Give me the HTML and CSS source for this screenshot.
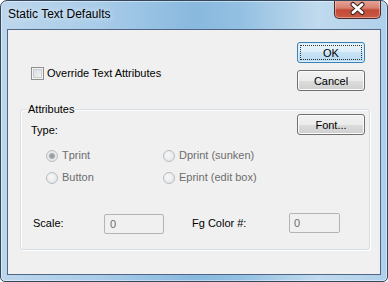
FILE: index.html
```html
<!DOCTYPE html>
<html lang="en">
<head>
    <meta charset="UTF-8">
    <title>Static Text Defaults</title>
    <link rel="stylesheet" href="styles.css">
</head>
<body>
    <div class="window">
        <!-- Заголовок окна -->
        <div class="titlebar">
            <span class="title">Static Text Defaults</span>
            <button class="close-btn" title="Close">
                <svg width="47" height="19" viewBox="0 0 47 19">
                    <path d="M19 5.5 L28 13.5 M28 5.5 L19 13.5" stroke="#3d2020" stroke-width="5" stroke-linecap="round"/>
                    <path d="M19 5.5 L28 13.5 M28 5.5 L19 13.5" stroke="#fff" stroke-width="3" stroke-linecap="round"/>
                </svg>
            </button>
        </div>

        <!-- Клиентская область -->
        <div class="client">
            <div class="top">
                <label class="check-row">
                    <span class="checkbox"></span>
                    <span>Override Text Attributes</span>
                </label>
                <div class="buttons">
                    <button class="btn btn-default">OK</button>
                    <button class="btn">Cancel</button>
                </div>
            </div>

            <div class="group">
                <span class="group-title">Attributes</span>
                <div class="group-head">
                    <span class="type-label">Type:</span>
                    <button class="btn">Font...</button>
                </div>
                <div class="radios">
                    <div class="radio-row"><span class="radio checked"></span>Tprint</div>
                    <div class="radio-row"><span class="radio"></span>Dprint (sunken)</div>
                    <div class="radio-row"><span class="radio"></span>Button</div>
                    <div class="radio-row"><span class="radio"></span>Eprint (edit box)</div>
                </div>
                <div class="fields">
                    <span class="field-label scale-label">Scale:</span>
                    <input class="edit scale-edit" type="text" value="0" disabled>
                    <span class="field-label fg-label">Fg Color #:</span>
                    <input class="edit fg-edit" type="text" value="0" disabled>
                </div>
            </div>
        </div>
    </div>
</body>
</html>
```

FILE: styles.css
```css
/* Основные стили */
body {
    margin: 0;
    font-family: "Liberation Sans", Arial, sans-serif;
    font-size: 11px;
    color: #000;
    background: #fff;
}
.window {
    width: 388px;
    height: 282px;
    box-sizing: border-box;
    border: 1px solid #34475c;
    border-radius: 7px 7px 5px 5px;
    display: flex;
    flex-direction: column;
    background: linear-gradient(to right, #bcd6ec 0%, #a9cce9 25%, #89b9de 50%, #93c0e2 62%, #c0daee 82%, #afd0ea 100%);
    box-shadow: inset 0 0 0 1px rgba(255, 255, 255, 0.45);
    overflow: hidden;
}

/* Заголовок */
.titlebar {
    height: 28px;
    display: flex;
    justify-content: space-between;
    align-items: flex-start;
    padding-left: 7px;
    padding-right: 6px;
}
.title {
    font-size: 12px;
    line-height: 27px;
    color: #000;
    text-shadow: 0 0 6px rgba(255, 255, 255, 0.9);
}
.close-btn {
    width: 47px;
    height: 19px;
    margin-top: -1px;
    padding: 0;
    border: 1px solid #4a2a2a;
    border-top: none;
    border-radius: 0 0 5px 5px;
    background: linear-gradient(#e6a99c 0%, #d7806f 45%, #c44a36 55%, #c65a44 100%);
    box-shadow: inset 0 0 0 1px rgba(255, 210, 200, 0.5);
    display: block;
    box-sizing: border-box;
}
.close-btn svg {
    display: block;
    margin: -1px 0 0 -1px;
}

/* Клиентская область */
.client {
    flex: 1;
    margin: 0 6px 6px 6px;
    border: 1px solid #4f6782;
    background: #f0f0f0;
}
.top {
    display: flex;
    justify-content: space-between;
    padding: 12px 15px 0 23px;
}
.check-row {
    display: flex;
    align-items: center;
    gap: 3px;
    height: 13px;
    line-height: 13px;
    margin-top: 25px;
}
.checkbox {
    width: 11px;
    height: 11px;
    border: 1px solid #8e8f8f;
    background: linear-gradient(135deg, #d6d8db, #f7f7f7);
    box-shadow: inset 0 0 0 1px #f4f4f4, inset 0 0 0 2px #c9ccd0;
}
.buttons {
    display: flex;
    flex-direction: column;
    gap: 7px;
}
.btn {
    width: 68px;
    height: 21px;
    padding: 0;
    border: 1px solid #707070;
    border-radius: 3px;
    font-family: inherit;
    font-size: 11px;
    color: #000;
    background: linear-gradient(#f2f2f2 0%, #ebebeb 50%, #dddddd 50%, #cfcfcf 100%);
    box-shadow: inset 0 0 0 1px #fbfbfb;
}
.btn-default {
    border-color: #3c7fb1;
    background: linear-gradient(#eaf5fc 0%, #dcedf9 50%, #c8e3f6 50%, #b9dbf2 100%);
    box-shadow: inset 0 0 0 1px #d8f0fd;
    outline: 1px dotted #333;
    outline-offset: -4px;
}

/* Группа атрибутов */
.group {
    position: relative;
    height: 141px;
    box-sizing: border-box;
    margin: 18px 10px 0 12px;
    padding: 4px 4px 0 10px;
    border: 1px solid #d5dfe5;
    border-radius: 3px;
    box-shadow: inset 1px 1px 0 #fff, 1px 1px 0 #fff;
}
.group-title {
    position: absolute;
    top: -7px;
    left: 6px;
    padding: 0 1px;
    line-height: 13px;
    background: #f0f0f0;
}
.group-head {
    display: flex;
    justify-content: space-between;
    align-items: flex-start;
}
.type-label {
    margin-top: 10px;
    line-height: 13px;
}
.radios {
    display: grid;
    grid-template-columns: 117px auto;
    row-gap: 9px;
    margin-top: 12px;
    padding-left: 15px;
    color: #6d6d6d;
}
.radio-row {
    display: flex;
    align-items: center;
    gap: 4px;
    line-height: 13px;
}
.radio {
    width: 10px;
    height: 10px;
    border: 1px solid #b8bcc0;
    border-radius: 50%;
    background: radial-gradient(circle at 40% 40%, #f8f8f8, #dfe1e3);
}
.radio.checked {
    background: radial-gradient(circle, #8e9296 0, #a8acb0 2.5px, #e4e6e8 3.5px, #f2f2f2 100%);
}
.fields {
    display: flex;
    align-items: flex-start;
    margin-top: 29px;
}
.field-label {
    line-height: 13px;
    margin-top: 4px;
}
.scale-label {
    width: 71px;
    margin-left: 2px;
}
.fg-label {
    width: 97px;
    margin-left: 28px;
}
.edit {
    height: 20px;
    box-sizing: border-box;
    padding: 0 0 0 5px;
    border: 1px solid #b2b5b8;
    border-radius: 2px;
    background: #f0f0f0;
    font-family: inherit;
    font-size: 11px;
    color: #6d6d6d;
}
.scale-edit {
    width: 60px;
    margin-top: 1px;
}
.fg-edit {
    width: 51px;
    padding-left: 4px;
}
```
